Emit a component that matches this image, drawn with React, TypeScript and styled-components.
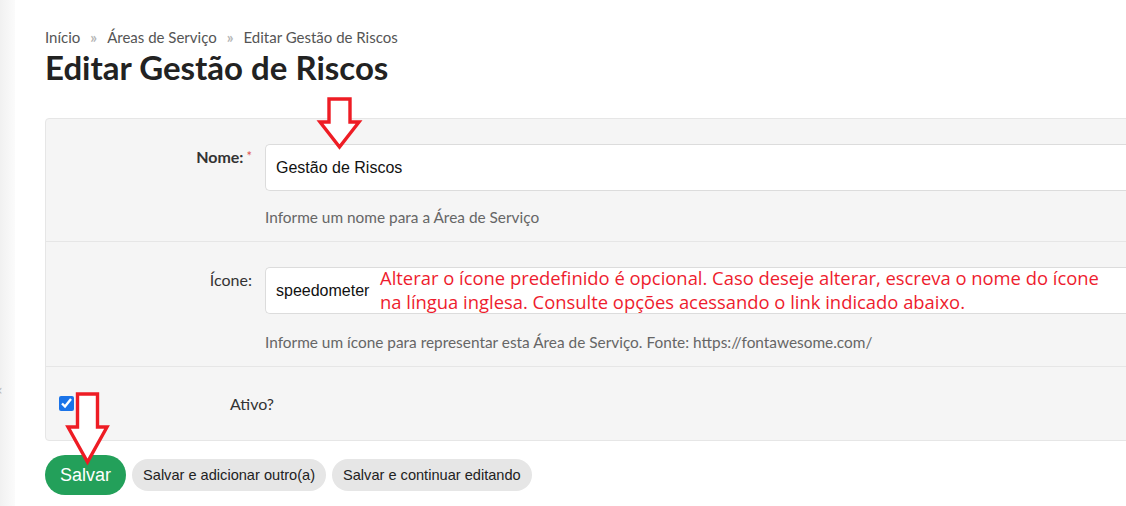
import React from "react";
import styled, { createGlobalStyle } from "styled-components";

const Global = createGlobalStyle`
  html, body { margin: 0; padding: 0; background: #fff; }
  body { font-family: Lato, "Open Sans", sans-serif; color: #333; overflow: hidden; }
  * { box-sizing: border-box; }
`;

const Page = styled.div`
  display: flex;
  width: 1126px;
  height: 506px;
  position: relative;
  overflow: hidden;
`;

const SideStrip = styled.div`
  width: 15px;
  flex: none;
  background: linear-gradient(to right, #f1f1f1, #fbfbfb);
  display: flex;
  align-items: flex-start;
  padding-top: 382px;
`;

const Toggle = styled.span`
  font-family: "DejaVu Sans", sans-serif;
  font-size: 14px;
  color: #b5b5b5;
  margin-left: -6px;
  line-height: 16px;
`;

const Main = styled.main`
  flex: 1;
  padding: 27px 0 0 30px;
  min-width: 0;
`;

const Breadcrumb = styled.nav`
  display: flex;
  align-items: center;
  gap: 10px;
  font-size: 15px;
  line-height: 20px;
  color: #555;
`;

const Crumb = styled.span`
  color: #555;
`;

const Sep = styled.span`
  color: #b5b5b5;
  font-size: 15px;
  font-weight: 700;
`;

const Title = styled.h1`
  margin: 1px 0 0;
  font-size: 33px;
  line-height: 38px;
  font-weight: 700;
  color: #222;
`;

const Panel = styled.div`
  margin-top: 32px;
  width: 1100px;
  background: #f5f5f5;
  border: 1px solid #e6e6e6;
  border-radius: 4px;
`;

const Row = styled.div`
  display: grid;
  grid-template-columns: 206px 1fr;
  column-gap: 13px;
  padding: 25px 0 14px;
  border-bottom: 1px solid #e6e6e6;
`;

const Label = styled.label<{ $bold?: boolean }>`
  text-align: right;
  padding-top: 3px;
  font-size: 16px;
  line-height: 20px;
  font-weight: ${(p) => (p.$bold ? 700 : 400)};
  color: #333;
`;

const Req = styled.span`
  color: #e0534f;
  font-weight: 400;
  font-size: 13px;
  margin-left: 3px;
  position: relative;
  top: -2px;
`;

const Field = styled.div`
  position: relative;
`;

const TextInput = styled.div`
  height: 47px;
  background: #fff;
  border: 1px solid #dcdcdc;
  border-right: none;
  border-radius: 5px 0 0 5px;
  display: flex;
  align-items: center;
  padding: 0 10px;
  font-family: "Liberation Sans", Arial, sans-serif;
  font-size: 16px;
  color: #111;
`;

const Help = styled.div<{ $gap: number }>`
  margin-top: ${(p) => p.$gap}px;
  font-size: 15.4px;
  line-height: 20px;
  color: #666;
`;

const Note = styled.div`
  position: absolute;
  left: 115px;
  top: -1px;
  font-family: "Open Sans", sans-serif;
  font-size: 18.4px;
  line-height: 24px;
  color: #ee1c2e;
  white-space: nowrap;
`;

const CheckRow = styled.div`
  display: flex;
  align-items: center;
  height: 73px;
  padding-left: 13px;
`;

const Check = styled.input`
  width: 15px;
  height: 15px;
  margin: 0;
  accent-color: #1a73e8;
`;

const CheckLabel = styled.span`
  margin-left: 156px;
  font-size: 16px;
  color: #333;
`;

const Actions = styled.div`
  display: flex;
  align-items: center;
  gap: 6px;
  margin-top: 14px;
`;

const Button = styled.button<{ $primary?: boolean }>`
  font-family: "Liberation Sans", Arial, sans-serif;
  border: none;
  border-radius: 20px;
  height: ${(p) => (p.$primary ? 40 : 32)}px;
  padding: ${(p) => (p.$primary ? "0 15px" : "0 11px")};
  font-size: ${(p) => (p.$primary ? 18 : 14.6)}px;
  background: ${(p) => (p.$primary ? "#23a05a" : "#e6e6e6")};
  color: ${(p) => (p.$primary ? "#fff" : "#222")};
  cursor: pointer;
`;

const ArrowSvg = styled.svg`
  position: absolute;
  overflow: visible;
  pointer-events: none;
`;

function Arrow({ x, y, w, h, shaft, headStart }: { x: number; y: number; w: number; h: number; shaft: number; headStart: number }) {
  const cx = w / 2;
  const s = shaft / 2;
  const d = `M${cx - s} 0 H${cx + s} V${headStart} H${w} L${cx} ${h} L0 ${headStart} H${cx - s} Z`;
  return (
    <ArrowSvg style={{ left: x, top: y }} width={w} height={h} viewBox={`0 0 ${w} ${h}`}>
      <path d={d} fill="#fff" stroke="#ee1c24" strokeWidth={3.4} strokeLinejoin="miter" />
    </ArrowSvg>
  );
}

export default function App() {
  return (
    <Page>
      <Global />
      <SideStrip>
        <Toggle>«</Toggle>
      </SideStrip>
      <Main>
        <Breadcrumb>
          <Crumb>Início</Crumb>
          <Sep>»</Sep>
          <Crumb>Áreas de Serviço</Crumb>
          <Sep>»</Sep>
          <Crumb>Editar Gestão de Riscos</Crumb>
        </Breadcrumb>
        <Title>Editar Gestão de Riscos</Title>
        <Panel>
          <Row>
            <Label $bold>
              Nome:<Req>*</Req>
            </Label>
            <Field>
              <TextInput>Gestão de Riscos</TextInput>
              <Help $gap={16}>Informe um nome para a Área de Serviço</Help>
            </Field>
          </Row>
          <Row>
            <Label>Ícone:</Label>
            <Field>
              <TextInput>speedometer</TextInput>
              <Note>
                Alterar o ícone predefinido é opcional. Caso deseje alterar, escreva o nome do ícone
                <br />
                na língua inglesa. Consulte opções acessando o link indicado abaixo.
              </Note>
              <Help $gap={18}>
                Informe um ícone para representar esta Área de Serviço. Fonte: https://fontawesome.com/
              </Help>
            </Field>
          </Row>
          <CheckRow>
            <Check type="checkbox" defaultChecked />
            <CheckLabel>Ativo?</CheckLabel>
          </CheckRow>
        </Panel>
        <Actions>
          <Button $primary>Salvar</Button>
          <Button>Salvar e adicionar outro(a)</Button>
          <Button>Salvar e continuar editando</Button>
        </Actions>
      </Main>
      <Arrow x={320} y={99} w={39} h={48} shaft={21} headStart={23} />
      <Arrow x={68} y={394} w={39} h={68} shaft={20} headStart={33} />
    </Page>
  );
}
